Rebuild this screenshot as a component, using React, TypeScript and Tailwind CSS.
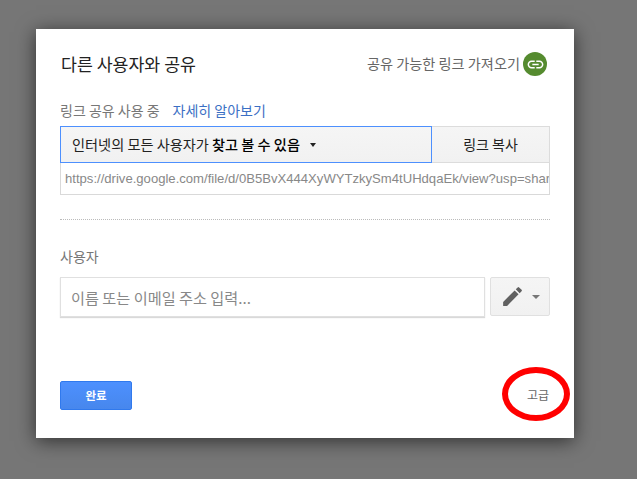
const FONT = "font-['Noto_Sans_CJK_KR','Noto_Sans',sans-serif]";

export default function App() {
  return (
    <div className={`w-[637px] h-[479px] overflow-hidden bg-[#767676] pt-[29px] pl-[36px] ${FONT}`}>
      <div className="relative flex h-[409px] w-[538px] flex-col bg-white px-[24px] shadow-[0_3px_18px_rgba(0,0,0,0.6)]">
        {/* header */}
        <div className="mt-[17px] flex h-[36px] items-center justify-between pr-[3px]">
          <h1 className="pl-[1px] text-[17.3px] leading-none font-normal text-[#222]">다른 사용자와 공유</h1>
          <div className="flex items-center gap-[3px] text-[14.2px] text-[#666]">
            <span>공유 가능한 링크 가져오기</span>
            <div className="flex h-[24px] w-[24px] items-center justify-center rounded-full bg-[#558b2f]">
              <svg viewBox="0 0 24 24" className="h-[19px] w-[19px] fill-white">
                <path d="M3.9 12c0-1.71 1.39-3.1 3.1-3.1h4V7H7c-2.76 0-5 2.24-5 5s2.24 5 5 5h4v-1.9H7c-1.71 0-3.1-1.39-3.1-3.1zM8 13h8v-2H8v2zm9-6h-4v1.9h4c1.71 0 3.1 1.39 3.1 3.1s-1.39 3.1-3.1 3.1h-4V17h4c2.76 0 5-2.24 5-5s-2.24-5-5-5z" />
              </svg>
            </div>
          </div>
        </div>

        <div className="mt-[16px] flex h-[24px] items-center text-[14px] text-[#777]">
          <span>링크 공유 사용 중</span>
          <a className="ml-[13px] text-[#3b6fc4]">자세히 알아보기</a>
        </div>

        {/* link access row */}
        <div className="mt-[4px] flex h-[37px]">
          <div className="flex w-[372px] items-center border border-[#4d90fe] bg-linear-to-b from-[#f5f5f5] to-[#f1f1f1] pl-[11px] text-[14.2px] text-[#222]">
            <span>인터넷의 모든 사용자가 <b className="font-medium text-black">찾고 볼 수 있음</b></span>
            <span className="ml-[10px] h-0 w-0 border-x-[3.5px] border-t-[4px] border-x-transparent border-t-[#222]" />
          </div>
          <div className="flex w-[118px] items-center justify-center border border-l-0 border-[#dcdcdc] bg-linear-to-b from-[#f5f5f5] to-[#f1f1f1] text-[14px] text-[#222]">
            링크 복사
          </div>
        </div>
        <input
          readOnly
          value="https://drive.google.com/file/d/0B5BvX444XyWYTzkySm4tUHdqaEk/view?usp=sharing"
          className="h-[32px] w-[490px] border border-t-0 border-[#d9d9d9] pl-[4px] pr-0 font-['Liberation_Sans',sans-serif] text-[13.1px] text-[#888] outline-none"
        />

        <div className="mt-[24px] border-t border-dotted border-[#bbb]" />

        <div className="mt-[26px] flex h-[20px] items-center text-[14px] text-[#777]">사용자</div>

        {/* people row */}
        <div className="mt-[11px] flex gap-[5px]">
          <div className="flex h-[40px] w-[425px] items-center border border-[#e0e0e0] pl-[10px] text-[15.2px] text-[#888] shadow-[0_1px_1px_rgba(0,0,0,0.15)]">
            이름 또는 이메일 주소 입력...
          </div>
          <div className="flex h-[39px] w-[60px] items-center gap-[7px] rounded-[2px] border border-[#e0e0e0] bg-linear-to-b from-[#f5f5f5] to-[#f1f1f1] pl-[9px]">
            <svg viewBox="0 0 24 24" className="h-[25px] w-[25px] fill-[#616161]">
              <path d="M3 17.25V21h3.75L17.81 9.94l-3.75-3.75L3 17.25zM20.71 7.04a1 1 0 0 0 0-1.41l-2.34-2.34a1 1 0 0 0-1.41 0l-1.83 1.83 3.75 3.75 1.83-1.83z" />
            </svg>
            <span className="h-0 w-0 border-x-[4px] border-t-[4px] border-x-transparent border-t-[#777]" />
          </div>
        </div>

        {/* footer */}
        <div className="mt-[64px] flex items-center justify-between">
          <button className="h-[29px] w-[72px] rounded-[2px] border border-[#3079ed] bg-linear-to-b from-[#4d90fe] to-[#4787ed] text-[11.5px] font-bold text-white">
            완료
          </button>
          <span className="mr-[1px] mt-[-2px] text-[12px] text-[#666]">고급</span>
        </div>

        {/* red marker drawn over the screenshot */}
        <div className="absolute left-[466px] top-[338px] h-[54px] w-[68px] rounded-[50%] border-[6px] border-[#f00]" />
      </div>
    </div>
  );
}
